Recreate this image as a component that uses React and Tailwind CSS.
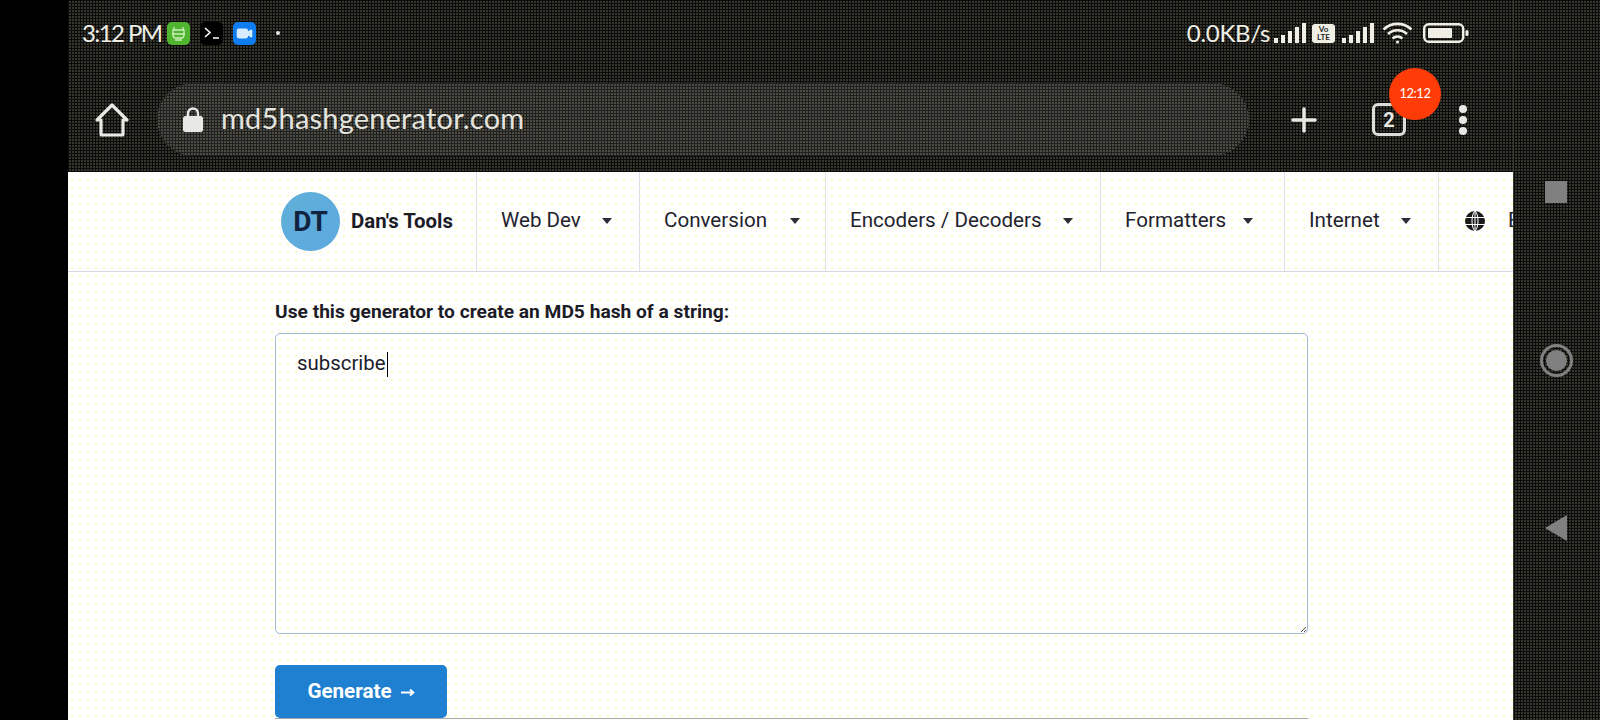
import { Plus, Video } from 'lucide-react'

/* dithered dark surface of the recording */
const DARK = 'bg-[linear-gradient(90deg,#0b0b0b_1px,transparent_1px),linear-gradient(#0b0b0b_1px,#36362c_1px)] bg-[length:3px_3px]'

/* ── StatusBar ───────────────────────────────────────────────── */
function Signal() {
  return (
    <svg width="32" height="20" viewBox="0 0 32 20" fill="#efefe6">
      <rect x="0" y="15" width="4" height="5" />
      <rect x="7" y="12" width="4" height="8" />
      <rect x="14" y="8" width="4" height="12" />
      <rect x="21" y="4" width="4" height="16" />
      <rect x="28" y="0" width="4" height="20" />
    </svg>
  )
}

function StatusBar() {
  return (
    <div className="h-[66px] flex items-center pl-[14px] pr-[44px] font-['Lato',sans-serif] text-[#efefe6]">
      <span className="text-[24px] font-normal tracking-[-1.6px] w-[85px] whitespace-nowrap">3:12 PM</span>
      <span className="w-[23px] h-[23px] rounded-[5px] bg-[#4fb52f] flex items-center justify-center">
        <svg width="17" height="17" viewBox="0 0 17 17" fill="none" stroke="#cdeebb" strokeWidth="1.3">
          <path d="M4 2v3M13 2v3M3 5h11v5a3 3 0 0 1-3 3H6a3 3 0 0 1-3-3zM2 9h13M5 15h7" />
        </svg>
      </span>
      <span className="ml-[10px] w-[23px] h-[23px] rounded-[5px] bg-black flex items-center justify-center">
        <svg width="16" height="12" viewBox="0 0 16 12" fill="none" stroke="#fff" strokeWidth="1.6">
          <path d="M1 1l5 4.5L1 10M9 11h6" />
        </svg>
      </span>
      <span className="ml-[10px] w-[23px] h-[23px] rounded-[5px] bg-[#0f7cf0] flex items-center justify-center">
        <Video size={17} color="#d8ecff" fill="#d8ecff" />
      </span>
      <span className="ml-[20px] w-[4px] h-[4px] rounded-full bg-[#e6e6e6]" />
      <span className="ml-auto mr-[-2px] text-[24px] font-normal tracking-[-0.3px] whitespace-nowrap">0.0KB/s</span>
      <span className="ml-[6px]"><Signal /></span>
      <span className="ml-[6px] w-[23px] h-[19px] rounded-[3px] bg-[#efefe6] text-[#222] text-[8px] leading-[8px] font-bold text-center pt-[1px]">Vo<br />LTE</span>
      <span className="ml-[7px]"><Signal /></span>
      <svg className="ml-[8px]" width="31" height="22" viewBox="0 0 30 22" fill="none" stroke="#efefe6" strokeWidth="2.6">
        <path d="M1 7.500c8-7.500 20-7.500 28 0M5.500 12c5.500-5 13.500-5 19 0M10 16.500c3-2.500 7-2.500 10 0" />
        <circle cx="15" cy="20" r="1.600" fill="#efefe6" stroke="none" />
      </svg>
      <svg className="ml-[10px]" width="46" height="20" viewBox="0 0 46 20" fill="none">
        <rect x="1.200" y="1.200" width="39" height="17.600" rx="4.500" stroke="#efefe6" strokeWidth="2.400" />
        <rect x="5" y="5" width="24" height="10" rx="1" fill="#efefe6" />
        <rect x="42.500" y="7" width="3" height="6" rx="1.500" fill="#efefe6" />
      </svg>
    </div>
  )
}

/* ── BrowserBar ──────────────────────────────────────────────── */
function BrowserBar() {
  return (
    <div className="relative h-[106px] flex items-start text-[#e8e8e4]">
      <div className="w-[89px] h-[73px] mt-[17px] flex items-center justify-end pr-[28px]">
        <svg width="34" height="34" viewBox="0 0 34 34" fill="none" stroke="#e8e8e4" strokeWidth="3.200" strokeLinejoin="round" strokeLinecap="round">
          <path d="M2 17L17 2l15 15h-4v14a1 1 0 0 1-1 1H7a1 1 0 0 1-1-1V17z" />
        </svg>
      </div>
      <div className="w-[1092px] h-[73px] mt-[17px] rounded-full flex items-center pl-[26px] bg-[linear-gradient(90deg,#1f1f1f_1px,transparent_1px),linear-gradient(#1f1f1f_1px,#4c4c42_1px)] bg-[length:3px_3px]">
        <svg width="20" height="25" viewBox="0 0 20 25">
          <path d="M5 10V6.500a5 5 0 0 1 10 0V10" fill="none" stroke="#e8e8e4" strokeWidth="2.400" />
          <rect x="0" y="9" width="20" height="16" rx="2.500" fill="#e8e8e4" />
        </svg>
        <span className="ml-[18px] mb-[3px] font-['Lato',sans-serif] text-[29px] tracking-[0.2px] text-[#e4e4df]">md5hashgenerator.com</span>
      </div>
      <div className="ml-[36px] h-[73px] mt-[17px] flex items-center">
        <Plus size={38} strokeWidth={2.200} color="#e8e8e4" />
        <div className="ml-[49px] w-[34px] h-[33px] border-[3px] border-[#dcdcd8] rounded-[6px] flex items-center justify-center font-['Roboto',sans-serif] font-bold text-[20px]">2</div>
        <div className="ml-[53px] flex flex-col gap-[3px]">
          <span className="w-[8px] h-[8px] rounded-full bg-[#e8e8e4]" />
          <span className="w-[8px] h-[8px] rounded-full bg-[#e8e8e4]" />
          <span className="w-[8px] h-[8px] rounded-full bg-[#e8e8e4]" />
        </div>
      </div>
      {/* recording timer bubble */}
      <div className="absolute left-[1321px] top-[2px] w-[52px] h-[52px] rounded-full bg-[#ff3c08] flex items-center justify-center text-white text-[13px] font-['Lato',sans-serif] tracking-[-0.5px]">
        12:12
      </div>
    </div>
  )
}

/* ── NavItem ─────────────────────────────────────────────────── */
function Caret() {
  return <span className="w-0 h-0 border-x-[5.500px] border-x-transparent border-t-[6px] border-t-[#2c2c36]" />
}

function NavItem({ label, width, gap }) {
  return (
    <div className={`${width} h-full shrink-0 flex items-center pl-[24px] pb-[2px] border-r border-[#dfe1ea]`}>
      <span className="text-[20.600px] text-[#23232e] whitespace-nowrap">{label}</span>
      <span className={`${gap} flex`}><Caret /></span>
    </div>
  )
}

/* ── Nav ─────────────────────────────────────────────────────── */
function Nav() {
  return (
    <div className="h-[100px] shrink-0 border-b border-[#d6d8e2] flex overflow-hidden font-['Roboto',sans-serif]">
      <div className="w-[409px] h-full shrink-0 flex items-center pl-[213px] border-r border-[#dfe1ea]">
        <div className="w-[59px] h-[59px] rounded-full bg-gradient-to-br from-[#5fb0d8] to-[#5ea8e0] flex items-center justify-center font-bold text-[28px] text-[#11233f]">DT</div>
        <span className="ml-[11px] font-bold text-[20.400px] text-[#1c1c28] whitespace-nowrap">Dan's Tools</span>
      </div>
      <NavItem label="Web Dev" width="w-[163px]" gap="ml-[21px]" />
      <NavItem label="Conversion" width="w-[186px]" gap="ml-[23px]" />
      <NavItem label="Encoders / Decoders" width="w-[275px]" gap="ml-[21px]" />
      <NavItem label="Formatters" width="w-[184px]" gap="ml-[17px]" />
      <NavItem label="Internet" width="w-[154px]" gap="ml-[21px]" />
      <div className="h-full shrink-0 flex items-center pl-[26px] pb-[2px]">
        <svg width="20" height="20" viewBox="0 0 20 20" fill="#1a1a1a">
          <circle cx="10" cy="10" r="10" />
          <path d="M0 6.500h20M0 13.500h20M10 0v20M10 0C6 3 6 17 10 20M10 0c4 3 4 17 0 20" fill="none" stroke="#fff" strokeWidth="1" />
        </svg>
        <span className="ml-[23px] text-[20.600px] text-[#23232e]">English</span>
      </div>
    </div>
  )
}

/* ── App ─────────────────────────────────────────────────────── */
export default function App() {
  return (
    <div className="w-[1600px] h-[720px] flex overflow-hidden bg-black font-['Roboto',sans-serif]">
      <div className="w-[68px] shrink-0 bg-black" />
      <div className="w-[1445px] shrink-0 flex flex-col overflow-hidden bg-[#fefeff] bg-[radial-gradient(#fdf8c8_0.8px,transparent_0.8px)] bg-[length:8px_8px]">
        <div className={`h-[172px] shrink-0 ${DARK}`}>
          <StatusBar />
          <BrowserBar />
        </div>
        <Nav />
        <div className="pl-[207px] w-[1240px]">
          <p className="mt-[29px] font-bold text-[19.200px] leading-[22px] text-[#1c1c28] whitespace-nowrap">Use this generator to create an MD5 hash of a string:</p>
          <div className="relative mt-[10px] h-[301px] border border-[#a3b9d6] rounded-[5px] pl-[21px] pt-[16px]">
            <span className="text-[20.400px] leading-[26px] text-[#20202a]">subscribe</span>
            <span className="absolute left-[111px] top-[18px] w-[1px] h-[25px] bg-black" />
            <svg className="absolute right-[1px] bottom-[1px]" width="5" height="5" viewBox="0 0 5 5" stroke="#555" strokeWidth="1">
              <path d="M0 5L5 0M3 5l2-2" />
            </svg>
          </div>
          <button className="mt-[31px] w-[172px] h-[53px] rounded-[5px] bg-[#1f7fd0] text-white font-bold text-[20.600px] flex items-center justify-center gap-[9px]">
            Generate
            <svg width="14" height="10" viewBox="0 0 14 10" fill="none" stroke="#fff" strokeWidth="1.8">
              <path d="M0 5.500h12M9 2.500l3.500 3-3.500 3" />
            </svg>
          </button>
          <div className="h-[1px] bg-[#a8a8a8]" />
        </div>
      </div>
      <div className={`flex-1 border-l border-[#3a3a30] flex flex-col items-center ${DARK}`}>
        <span className="mt-[181px] ml-[-2px] w-[22px] h-[22px] bg-[#808080]" />
        <span className="mt-[141px] ml-[-2px] w-[33px] h-[33px] rounded-full border-[3px] border-[#808080] p-[3px] flex">
          <span className="w-full h-full rounded-full bg-[#808080]" />
        </span>
        <svg className="mt-[138px] ml-[-2px]" width="22" height="26" viewBox="0 0 22 26">
          <path d="M0 13L22 0v26z" fill="#808080" />
        </svg>
      </div>
    </div>
  )
}
